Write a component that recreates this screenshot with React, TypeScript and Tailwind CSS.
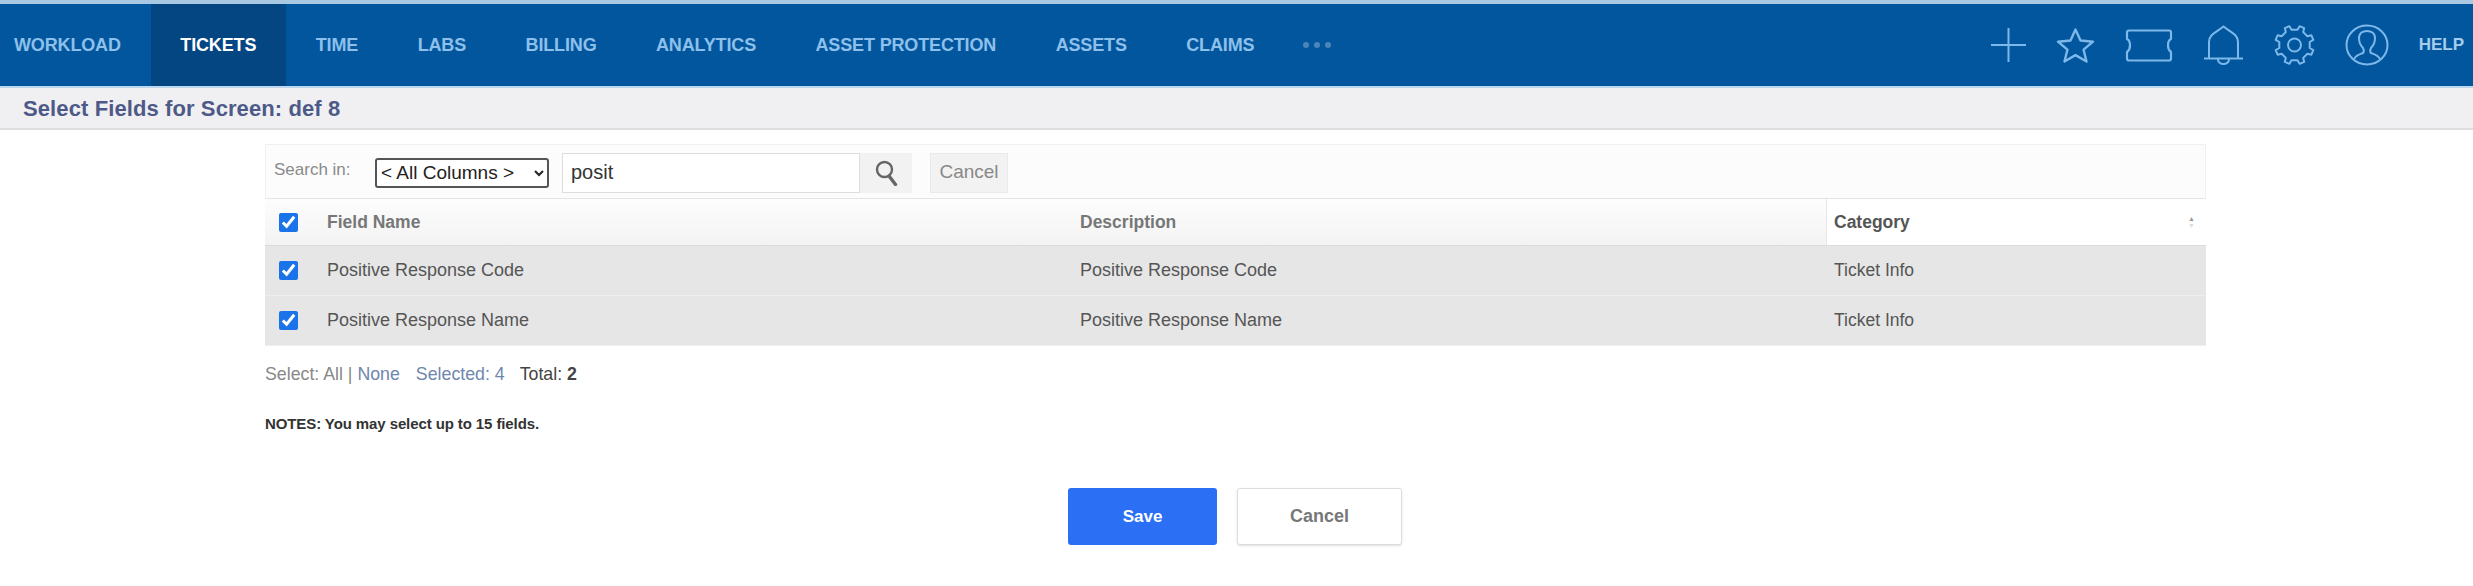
const navItems = ['WORKLOAD', 'TICKETS', 'TIME', 'LABS', 'BILLING', 'ANALYTICS', 'ASSET PROTECTION', 'ASSETS', 'CLAIMS'];

const rows = ['Positive Response Code', 'Positive Response Name'];

// 8 rounded teeth around the centre
const gearPath = () => {
  const pts: string[] = [];
  for (let i = 0; i < 8; i++) {
    const a = (i * Math.PI) / 4 - Math.PI / 8;
    [
      [15.5, -0.2],
      [19.5, -0.13],
      [19.5, 0.13],
      [15.5, 0.2],
    ].forEach(([r, d]) => {
      pts.push(`${(20.5 + r * Math.cos(a + d)).toFixed(1)} ${(20 + r * Math.sin(a + d)).toFixed(1)}`);
    });
  }
  return `M${pts.join('L')}Z`;
};

const PlusIcon = () => (
  <svg width="35" height="34" viewBox="0 0 35 34" fill="none" stroke="currentColor" strokeWidth="2">
    <path d="M0 17h35M17.5 0v34" />
  </svg>
);

const StarIcon = () => (
  <svg width="39" height="36" viewBox="0 0 39 36" fill="none" stroke="currentColor" strokeWidth="2.4" strokeLinejoin="round">
    <path d="M19.5 2.5l5 11 12.5 1.2-9.4 8 2.9 11.8-11-6.4-11 6.4 2.9-11.8-9.4-8L14.500 13.500z" />
  </svg>
);

const TicketIcon = () => (
  <svg width="48" height="33" viewBox="0 0 48 33" fill="none" stroke="currentColor" strokeWidth="2.2" strokeLinejoin="round">
    <path d="M4 1.500H44Q46 1.500 46 3.500V10C42 12 42 20 46 23V29.500Q46 31.500 44 31.500H4Q2 31.500 2 29.500V23C6 20 6 12 2 10V3.500Q2 1.500 4 1.500Z" />
  </svg>
);

const BellIcon = () => (
  <svg width="41" height="40" viewBox="0 0 41 40" fill="none" stroke="currentColor" strokeWidth="2">
    <path d="M6 33V17C6 9 14 7 20.500 1.500 27 7 35 9 35 17V33M1 33.500H40M15 34.500a5.500 4.500 0 0 0 11 0" />
  </svg>
);

const GearIcon = () => (
  <svg width="41" height="40" viewBox="0 0 41 40" fill="none" stroke="currentColor" strokeWidth="2" strokeLinejoin="round">
    <path d={gearPath()} />
    <circle cx="20.500" cy="20" r="6.500" />
  </svg>
);

const ProfileIcon = () => (
  <svg width="44" height="42" viewBox="0 0 44 42" fill="none" stroke="currentColor" strokeWidth="2">
    <ellipse cx="22" cy="21" rx="20.500" ry="19.500" />
    <path d="M9 35c2-4 7-5 9-6 1-1 1-3 0-5-2-2-4-6-4-10 0-5 4-7 8-7s8 2 8 7c0 4-2 8-4 10-1 2-1 4 0 5 2 1 7 2 9 6" />
  </svg>
);

const SearchIcon = () => (
  <svg width="23" height="26" viewBox="0 0 23 26" fill="none" stroke="currentColor">
    <circle cx="9.500" cy="9.500" r="7.500" strokeWidth="2.4" />
    <path d="M14 16l6.500 8.500" strokeWidth="3.400" strokeLinecap="round" />
  </svg>
);

const App = () => {
  return (
    <div className="w-[2473px] h-[586px] bg-white overflow-hidden font-['Liberation_Sans',Arial,sans-serif]">
      {/* top nav */}
      <header className="h-[88px] flex items-stretch justify-between bg-[#02569d] border-t-[4px] border-t-[#a9c9e2] border-b-[2px] border-b-[#bcd8ef]">
        <nav className="flex items-stretch pl-[14px]">
          {navItems.map((item, i) => (
            <div
              key={item}
              className={
                i === 1
                  ? 'flex items-center px-[29.750px] bg-[#034682] text-white text-[18px] font-bold tracking-[-0.15px]'
                  : 'flex items-center px-[29.750px] first:pl-0 text-[#8dc0ea] text-[18px] font-bold tracking-[-0.15px]'
              }
            >
              {item}
            </div>
          ))}
          <div className="flex items-center gap-[5px] pl-[19px]">
            <span className="w-[6px] h-[6px] rounded-full bg-[#4c86b9]" />
            <span className="w-[6px] h-[6px] rounded-full bg-[#4c86b9]" />
            <span className="w-[6px] h-[6px] rounded-full bg-[#4c86b9]" />
          </div>
        </nav>
        <div className="flex items-center gap-[30px] text-[#7db8ea] pr-[9px]">
          <PlusIcon />
          <StarIcon />
          <TicketIcon />
          <BellIcon />
          <GearIcon />
          <ProfileIcon />
          <span className="text-[17px] font-bold text-[#a5cdec]">HELP</span>
        </div>
      </header>

      {/* page title */}
      <div className="h-[42px] flex items-center pl-[23px] bg-[#f0f0f2] border-b-[2px] border-[#dedede]">
        <h1 className="text-[22px] font-bold tracking-[0.1px] text-[#4d5a88]">Select Fields for Screen: def 8</h1>
      </div>

      <main className="pl-[265px] pt-[14px] w-[2206px]">
        <div className="w-[1941px]">
          {/* search bar */}
          <div className="h-[55px] flex items-center pl-[8px] pt-[2px] bg-[#fcfcfc] border border-[#f0f0f0] border-b-[#e4e4e4]">
            <span className="w-[101px] text-[17px] text-[#8a8a8a] -mt-[6px]">Search in:</span>
            <select className="w-[174px] h-[30px] bg-white border-[2px] border-[#555] rounded-[3px] text-[19px] text-[#222]">
              <option>&lt; All Columns &gt;</option>
            </select>
            <input
              readOnly
              value="posit"
              className="ml-[13px] w-[298px] h-[40px] pl-[8px] bg-white border border-[#ddd] text-[20px] text-[#333]"
            />
            <button className="w-[52px] h-[40px] flex items-center justify-center bg-[#f2f2f2] text-[#666]">
              <SearchIcon />
            </button>
            <button className="ml-[18px] w-[78px] h-[40px] flex items-center justify-center bg-[#f2f2f2] border border-[#eaeaea] text-[19px] text-[#888]">
              Cancel
            </button>
          </div>

          {/* table */}
          <div className="grid grid-cols-[62px_753px_746px_380px] h-[47px] items-stretch bg-gradient-to-b from-[#fdfdfd] to-[#f3f3f3] border-b border-[#dcdcdc]">
            <div className="flex items-center pl-[14px]">
              <input type="checkbox" readOnly checked className="w-[19px] h-[19px] accent-[#1a73e8]" />
            </div>
            <div className="flex items-center text-[17.500px] font-bold text-[#777]">Field Name</div>
            <div className="flex items-center text-[17.500px] font-bold text-[#777]">Description</div>
            <div className="flex items-center justify-between pl-[7px] pr-[11px] bg-white border-l border-[#e6e6e6] text-[17.500px] font-bold text-[#555]">
              Category
              <span className="flex flex-col text-[7px] leading-[7px]">
                <span className="text-[#999]">▲</span>
                <span className="text-[#ddd]">▼</span>
              </span>
            </div>
          </div>
          {rows.map((name) => (
            <div
              key={name}
              className="grid grid-cols-[62px_753px_746px_380px] h-[50px] items-center bg-[#e6e6e6] border-b border-[#eeeeee] text-[18px] text-[#555]"
            >
              <div className="flex items-center pl-[14px]">
                <input type="checkbox" readOnly checked className="w-[19px] h-[19px] accent-[#1a73e8]" />
              </div>
              <div>{name}</div>
              <div>{name}</div>
              <div className="pl-[8px] text-[17.500px]">Ticket Info</div>
            </div>
          ))}

          {/* footer info */}
          <div className="mt-[15px] text-[17.750px] text-[#888]">
            Select: All | <span className="text-[#6f86ad]">None</span>
            <span className="ml-[16px] text-[#6f86ad]">Selected: 4</span>
            <span className="ml-[15px] text-[#444]">Total: <b>2</b></span>
          </div>
          <p className="mt-[25px] text-[15px] font-bold tracking-[-0.1px] text-[#333]">NOTES: You may select up to 15 fields.</p>
        </div>

        {/* actions */}
        <div className="mt-[53px] ml-[803px] flex gap-[20px]">
          <button className="w-[149px] h-[57px] rounded-[3px] bg-[#2b6ff5] text-white text-[17px] font-bold">Save</button>
          <button className="w-[165px] h-[57px] rounded-[3px] bg-white border border-[#ddd] shadow-sm text-[#777] text-[18px] font-bold">Cancel</button>
        </div>
      </main>
    </div>
  );
};

export default App;
